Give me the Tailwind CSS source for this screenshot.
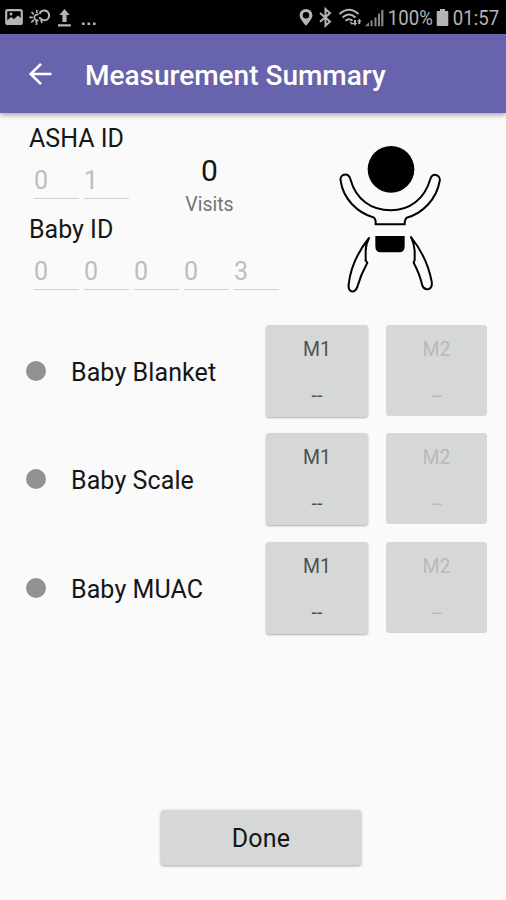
<!DOCTYPE html>
<html lang="en">
<head>
<meta charset="utf-8">
<title>Measurement Summary</title>
<script src="https://cdn.jsdelivr.net/npm/@tailwindcss/browser@4"></script>
</head>
<body class="bg-[#fafafa]">
<div class="w-[506px] h-[900px] overflow-hidden flex flex-col bg-[#fafafa] text-[#161616] font-['Roboto',sans-serif] text-[25px] leading-[30px]">
  <!-- Status bar -->
  <div class="h-[34px] shrink-0 bg-black flex items-center justify-between pl-[5px] pr-[6px] text-[#b4b4b4]">
    <svg class="w-[96px] h-[34px]" viewBox="5 0 96 34" fill="none" stroke="currentColor">
      <rect x="6.200" y="10.200" width="15.600" height="13.800" rx="1.500" stroke-width="2.200"/>
      <path d="M7 20.500l4-3.500 3 2 4-3.500 3.500 3V24H7z" fill="currentColor" stroke="none"/>
      <circle cx="11" cy="14" r="1.500" fill="currentColor" stroke="none"/>
      <path d="M39.500 14a4.900 4.900 0 1 1 4.500 6.300c-2.500 0-2.500-2.300-5-2.300" stroke-width="2.100"/>
      <path d="M38.500 20.200a3 3 0 1 1 0-5.500" stroke-width="1.700"/>
      <path d="M29.300 17.300h3.500M31.500 12l2.300 2.400M36.800 10v3M31.300 22.300l2.500-2.300M36.500 21v4M41 20l1 3" stroke-width="1.700"/>
      <path d="M64.500 9l5.200 6h-3.100v7h-4.200v-7h-3.100zM58 24.200h12.800v2.400H58z" fill="currentColor" stroke="none"/>
      <path d="M82 22.500h2.600v2.600H82zM87.500 22.500h2.600v2.600h-2.600zM93 22.500h2.600v2.600H93z" fill="currentColor" stroke="none"/>
    </svg>
    <div class="flex items-center text-[20px] leading-[34px]">
      <svg class="w-[88px] h-[34px] shrink-0" viewBox="297 0 88 34" fill="none" stroke="currentColor">
        <path fill="currentColor" stroke="none" fill-rule="evenodd" d="M305 9a6.400 6.400 0 0 1 6.400 6.400C311.400 19 305 25.800 305 25.800S298.600 19 298.600 15.400A6.400 6.400 0 0 1 305 9zm0 3a3.200 3.200 0 1 0 0 6.400 3.200 3.200 0 0 0 0-6.400z"/>
        <path d="M319 13l10 8.500-4.500 4.200V9l4.500 4.200-10 8.500" stroke-width="2"/>
        <path d="M338.500 14q9.500-8.500 19 0M341.500 17.500q6.500-6 13 0M344.500 20.800q3.500-3 7 0" stroke-width="2"/>
        <path d="M348 21.500l3 3.500 1.500-2zM353 20h2v3h1.300l-2.300 2.800-2.300-2.800h1.300zM357.300 24v-2.500h-1.300l2.300-2.800 2.300 2.800h-1.300V24z" fill="currentColor" stroke="none"/>
        <path d="M364 26.200l4-4v4zM369.500 20.500h2v5.700h-2zM373.500 17.500h2v8.700h-2zM377 13.500h2v12.700h-2zM380.200 10h2.200v16.200h-2.200z" fill="currentColor" fill-opacity=".75" stroke="none"/>
      </svg>
      <span class="w-[50px] pl-[2px] pt-[1px] origin-left scale-x-[.93]">100%</span>
      <svg class="w-[14px] h-[34px] shrink-0" viewBox="0 0 14 34" fill="currentColor"><path d="M4 9h5v2h2.500q.8 0 .8.800v13.400q0 .8-.8.800h-10q-.8 0-.8-.8V11.800q0-.8.8-.8H4z"/></svg>
      <span class="w-[50px] pl-[3px] pt-[1px] origin-left scale-x-[.93]">01:57</span>
    </div>
  </div>
  <!-- App bar -->
  <header class="h-[79px] shrink-0 bg-[#6764ad] flex items-center pl-[28px] text-white shadow-[0_2px_5px_rgba(0,0,0,.35)]">
    <svg class="w-[25px] h-[24px] shrink-0" viewBox="0 0 25 24" fill="none" stroke="#fff" stroke-width="2.600"><path d="M23.500 12H3M13 1.800L2.700 12 13 22.200"/></svg>
    <h1 class="ml-[32px] pt-[4px] text-[28px] font-medium whitespace-nowrap">Measurement Summary</h1>
  </header>
  <!-- Identification -->
  <section class="h-[201px] shrink-0 flex pl-[29px]">
    <div class="w-[250px] shrink-0">
      <div class="flex">
        <div class="w-[134px]">
          <h2 class="mt-[11px] h-[30px]">ASHA ID</h2>
          <div class="flex gap-[5px] pl-[5px] text-[#bdbdbd]">
            <span class="w-[45px] h-[45px] pt-[12px] border-b border-[#d2d2d2]">0</span>
            <span class="w-[45px] h-[45px] pt-[12px] border-b border-[#d2d2d2]">1</span>
          </div>
        </div>
        <div class="w-[93px] text-center pt-[43px]">
          <div class="text-[30px]">0</div>
          <div class="h-[24px] text-[19.500px] leading-[26px] mt-[6px] text-[#757575]">Visits</div>
        </div>
      </div>
      <h2 class="-mt-[1px] h-[30px]">Baby ID</h2>
      <div class="flex gap-[5px] pl-[5px] text-[#bdbdbd]">
        <span class="w-[45px] h-[45px] pt-[12px] shrink-0 border-b border-[#d2d2d2]">0</span>
        <span class="w-[45px] h-[45px] pt-[12px] shrink-0 border-b border-[#d2d2d2]">0</span>
        <span class="w-[45px] h-[45px] pt-[12px] shrink-0 border-b border-[#d2d2d2]">0</span>
        <span class="w-[45px] h-[45px] pt-[12px] shrink-0 border-b border-[#d2d2d2]">0</span>
        <span class="w-[45px] h-[45px] pt-[12px] shrink-0 border-b border-[#d2d2d2]">3</span>
      </div>
    </div>
    <svg class="w-[140px] h-[170px] ml-[41px] mt-[17px] shrink-0" viewBox="0 0 420 510" fill="none" stroke="#000" stroke-width="6">
      <circle cx="213" cy="118" r="70" fill="#000" stroke="none"/>
      <path d="M62 153C58 132 84 126 91 147C108 210 155 241 212 241C268 241 314 208 331 147C336 126 363 134 359 153C350 207 308 250 260 263Q254 268 254 283H167Q168 268 162 263C112 248 70 207 62 153Z"/>
      <path d="M166 318H254V348Q254 367 238 367H182Q166 367 166 348Z" fill="#000" stroke="none"/>
      <path d="M147 324Q138 340 137 362V392L142 398Q122 434 111 473Q106 486 94 484Q84 480 86 463C92 410 118 360 147 324Z" stroke-linejoin="round"/>
      <path d="M273 321Q282 339 284 362V390L281 398Q300 434 307 467Q312 480 326 477Q338 473 335 455C326 405 302 358 273 321Z" stroke-linejoin="round"/>
    </svg>
  </section>
  <!-- Measurements -->
  <main class="pt-[11px] flex flex-col gap-[16.300px] pl-[26px]">
    <div class="h-[92px] flex">
      <span class="size-[20px] mt-[36px] rounded-full bg-[#919191]"></span>
      <span class="w-[194px] ml-[25px] mt-[33px] whitespace-nowrap tracking-[0.100px]">Baby Blanket</span>
      <button class="w-[102px] h-[92px] ml-[1px] rounded-[3px] bg-[#d6d8d7] shadow-[0_1px_2px_rgba(0,0,0,.3)] flex flex-col items-center pt-[13px] gap-[22px] text-[19.500px] leading-[24px] text-[#505050]"><span>M1</span><span>--</span></button>
      <button class="w-[101px] h-[91px] ml-[18px] rounded-[3px] bg-[#d6d8d7] flex flex-col items-center pt-[13px] gap-[22px] text-[19.500px] leading-[24px] text-[#b8bab9]"><span>M2</span><span>--</span></button>
    </div>
    <div class="h-[92px] flex">
      <span class="size-[20px] mt-[36px] rounded-full bg-[#919191]"></span>
      <span class="w-[194px] ml-[25px] mt-[33px] whitespace-nowrap tracking-[0.100px]">Baby Scale</span>
      <button class="w-[102px] h-[92px] ml-[1px] rounded-[3px] bg-[#d6d8d7] shadow-[0_1px_2px_rgba(0,0,0,.3)] flex flex-col items-center pt-[13px] gap-[22px] text-[19.500px] leading-[24px] text-[#505050]"><span>M1</span><span>--</span></button>
      <button class="w-[101px] h-[91px] ml-[18px] rounded-[3px] bg-[#d6d8d7] flex flex-col items-center pt-[13px] gap-[22px] text-[19.500px] leading-[24px] text-[#b8bab9]"><span>M2</span><span>--</span></button>
    </div>
    <div class="h-[92px] flex">
      <span class="size-[20px] mt-[36px] rounded-full bg-[#919191]"></span>
      <span class="w-[194px] ml-[25px] mt-[33px] whitespace-nowrap tracking-[0.100px]">Baby MUAC</span>
      <button class="w-[102px] h-[92px] ml-[1px] rounded-[3px] bg-[#d6d8d7] shadow-[0_1px_2px_rgba(0,0,0,.3)] flex flex-col items-center pt-[13px] gap-[22px] text-[19.500px] leading-[24px] text-[#505050]"><span>M1</span><span>--</span></button>
      <button class="w-[101px] h-[91px] ml-[18px] rounded-[3px] bg-[#d6d8d7] flex flex-col items-center pt-[13px] gap-[22px] text-[19.500px] leading-[24px] text-[#b8bab9]"><span>M2</span><span>--</span></button>
    </div>
  </main>
  <button class="mt-auto mb-[35px] ml-[161px] w-[200px] h-[55px] pt-[2px] shrink-0 rounded-[3px] bg-[#d6d8d7] shadow-[0_1px_3px_rgba(0,0,0,.35)] tracking-[0.200px]">Done</button>
</div>
</body>
</html>
